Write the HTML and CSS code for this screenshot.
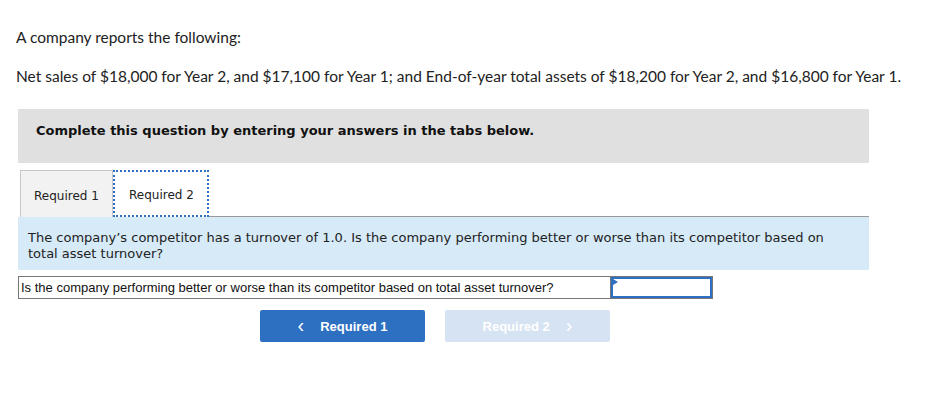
FILE: index.html
```html
<!DOCTYPE html>
<html>
<head>
<meta charset="utf-8">
<link rel="stylesheet" href="styles.css">
</head>
<body>
<div class="page">
  <p class="intro">A company reports the following:</p>
  <p class="intro second">Net sales of $18,000 for Year 2, and $17,100 for Year 1; and End-of-year total assets of $18,200 for Year 2, and $16,800 for Year 1.</p>

  <div class="instructions">Complete this question by entering your answers in the tabs below.</div>

  <div class="tabs">
    <div class="tab">Required 1</div>
    <div class="tab active">Required 2</div>
    <div class="tab-rest"></div>
  </div>

  <div class="prompt">The company’s competitor has a turnover of 1.0. Is the company performing better or worse than its competitor based on total asset turnover?</div>

  <div class="answer-row">
    <div class="answer-label">Is the company performing better or worse than its competitor based on total asset turnover?</div>
    <div class="answer-input"><span class="flag"></span></div>
  </div>

  <div class="nav">
    <button class="nav-btn prev"><span class="chev">&lsaquo;</span>Required 1</button>
    <button class="nav-btn next" disabled>Required 2<span class="chev">&rsaquo;</span></button>
  </div>
</div>
</body>
</html>
```

FILE: styles.css
```css
html, body {
  margin: 0;
  padding: 0;
  background: #fff;
}

.page {
  padding: 27px 0 0 18px;
  width: 851px;
}

.intro {
  margin: 0 0 0 -2px;
  font-family: "Lato", "Open Sans", sans-serif;
  font-size: 15.5px;
  line-height: 20px;
  color: #222;
  white-space: nowrap;
}

.intro.second {
  margin-top: 19px;
}

.instructions {
  margin-top: 23px;
  height: 54px;
  box-sizing: border-box;
  background: #e0e0e0;
  padding: 13px 18px 0;
  font-family: "DejaVu Sans", Verdana, sans-serif;
  font-weight: bold;
  font-size: 13px;
  line-height: 18px;
  color: #111;
}

.tabs {
  display: flex;
  margin-top: 7px;
  height: 47px;
  align-items: stretch;
}

.tab {
  box-sizing: border-box;
  display: flex;
  align-items: center;
  padding-top: 3px;
  font-family: "DejaVu Sans", Verdana, sans-serif;
  font-size: 12px;
  color: #222;
}

.tab:first-child {
  margin-left: 2px;
  width: 93px;
  padding-left: 13px;
  background: #f2f2f2;
  border: 1px solid #c8c8c8;
  border-bottom: none;
}

.tab.active {
  width: 96px;
  padding-left: 14px;
  background: #fff;
  border: 2px dotted #2d6fc1;
}

.tab-rest {
  flex: 1;
  border-bottom: 1px solid #999;
}

.prompt {
  background: #d6eaf8;
  height: 53px;
  box-sizing: border-box;
  padding: 13px 30px 0 10px;
  font-family: "DejaVu Sans", Verdana, sans-serif;
  font-size: 13px;
  line-height: 16px;
  color: #222;
}

.answer-row {
  display: flex;
  margin-top: 6px;
  height: 23px;
}

.answer-label {
  box-sizing: border-box;
  width: 593px;
  border: 1px solid #777;
  padding-left: 2px;
  font-family: "Liberation Sans", Arial, sans-serif;
  font-size: 13px;
  line-height: 21px;
  color: #111;
  white-space: nowrap;
}

.answer-input {
  position: relative;
  box-sizing: border-box;
  width: 102px;
  border: 1px solid #777;
  border-left: none;
  box-shadow: inset 0 0 0 2px #2d6fc1;
}

.flag {
  position: absolute;
  left: 2px;
  top: 2px;
  width: 0;
  height: 0;
  border-top: 3px solid transparent;
  border-bottom: 3px solid transparent;
  border-left: 5px solid #2d6fc1;
}

.nav {
  display: flex;
  gap: 20px;
  margin: 11px 0 0 242px;
}

.nav-btn {
  width: 165px;
  height: 32px;
  border: none;
  border-radius: 2px;
  display: flex;
  align-items: center;
  justify-content: center;
  font-family: "Liberation Sans", Arial, sans-serif;
  font-weight: bold;
  font-size: 13px;
  color: #fff;
  padding: 0;
}

.nav-btn.prev {
  background: #2d6fc1;
}

.nav-btn.next {
  background: #d6e3f3;
}

.chev {
  font-size: 20px;
  font-weight: normal;
  line-height: 1;
  margin-top: -3px;
}

.prev .chev {
  margin-right: 16px;
}

.next .chev {
  margin-left: 16px;
}
```
